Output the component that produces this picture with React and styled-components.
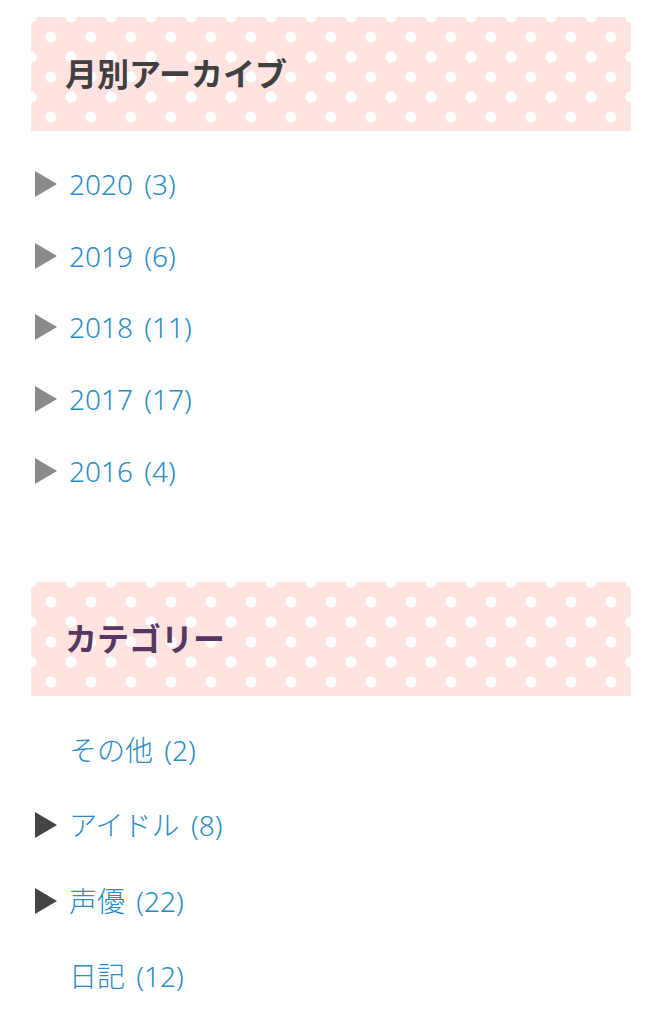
import React from "react";
import styled, { createGlobalStyle } from "styled-components";

const Global = createGlobalStyle`
  html, body { margin: 0; padding: 0; background: #fff; }
  body { font-family: "Noto Sans", "Noto Sans CJK JP", sans-serif; }
  ul { margin: 0; padding: 0; list-style: none; }
`;

const Sidebar = styled.aside`
  display: flex;
  flex-direction: column;
  width: 600px;
  padding: 17px 16px 0 31px;
`;

const Widget = styled.section`
  display: flex;
  flex-direction: column;
  & + & { margin-top: 75px; }
`;

const WidgetTitle = styled.h2`
  margin: 0;
  height: 114px;
  box-sizing: border-box;
  display: flex;
  align-items: center;
  padding: 0 0 4px 34px;
  font-family: "Noto Sans CJK JP", sans-serif;
  font-size: 32px;
  font-weight: 700;
  color: ${(p) => p.$color};
  background-color: #fee3e1;
  background-image:
    radial-gradient(circle at center, #fff 5.2px, rgba(255,255,255,0) 5.9px),
    radial-gradient(circle at center, #fff 5.2px, rgba(255,255,255,0) 5.9px);
  background-size: 40px 40px, 40px 40px;
  background-position: -20px -20px, 0 0;
`;

const List = styled.ul`
  display: flex;
  flex-direction: column;
  margin-top: ${(p) => p.$top}px !important;
`;

const Item = styled.li`
  display: flex;
  align-items: center;
  height: ${(p) => p.$h}px;
  font-size: 28px;
  line-height: 1;
`;

const MarkerSlot = styled.span`
  flex: 0 0 38px;
  display: flex;
  align-items: center;
  padding-left: 4px;
  box-sizing: border-box;
`;

const Triangle = styled.span`
  width: 0;
  height: 0;
  border-left: 22px solid ${(p) => p.$color};
  border-top: 13.5px solid transparent;
  border-bottom: 13.5px solid transparent;
`;

const Link = styled.a`
  color: #2a8bc6;
  text-decoration: none;
  font-weight: 300;
  word-spacing: 4px;
`;

const archives = [
  ["2020", 3],
  ["2019", 6],
  ["2018", 11],
  ["2017", 17],
  ["2016", 4],
];

const categories = [
  ["その他", 2, false],
  ["アイドル", 8, true],
  ["声優", 22, true],
  ["日記", 12, false],
];

export default function App() {
  return (
    <>
      <Global />
      <Sidebar>
        <Widget>
          <WidgetTitle $color="#404040">月別アーカイブ</WidgetTitle>
          <List $top={17}>
            {archives.map(([y, n]) => (
              <Item key={y} $h={71.75}>
                <MarkerSlot>
                  <Triangle $color="#8a8a8a" />
                </MarkerSlot>
                <Link href="#">{`${y} (${n})`}</Link>
              </Item>
            ))}
          </List>
        </Widget>
        <Widget>
          <WidgetTitle $color="#55375f">カテゴリー</WidgetTitle>
          <List $top={16}>
            {categories.map(([name, n, hasChildren]) => (
              <Item key={name} $h={75.5}>
                <MarkerSlot>
                  {hasChildren && <Triangle $color="#444" />}
                </MarkerSlot>
                <Link href="#">{`${name} (${n})`}</Link>
              </Item>
            ))}
          </List>
        </Widget>
      </Sidebar>
    </>
  );
}
